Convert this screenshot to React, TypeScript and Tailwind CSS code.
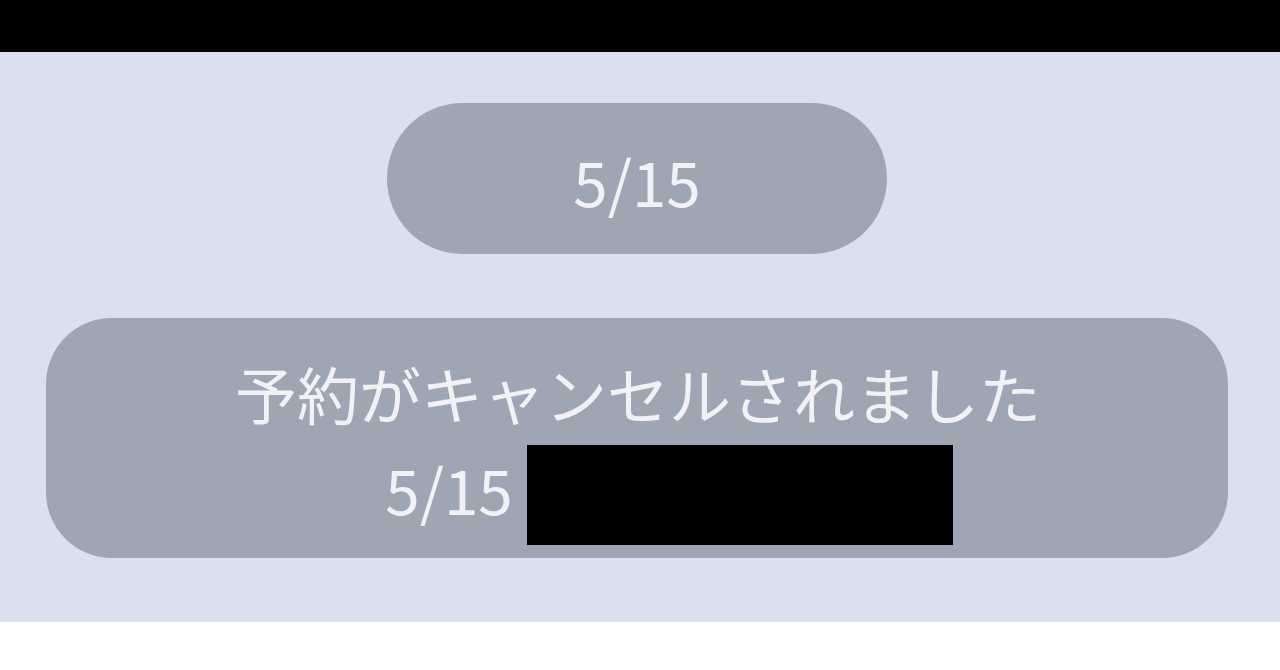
import React from 'react'

const FONT = { fontFamily: '"Noto Sans CJK JP", "Noto Sans", sans-serif' }

function DatePill({ label }: { label: string }) {
  return (
    <div className="ml-[387px] w-[500px] h-[151px] rounded-full bg-[#9ea5b3] flex items-center justify-center">
      <span className="text-[62px] leading-none text-[#f1f2f5] pt-[3px]">{label}</span>
    </div>
  )
}

function NoticeBubble() {
  return (
    <div className="ml-[46px] mt-[64px] w-[1182px] h-[240px] rounded-[66px] bg-[#9ea5b3] flex flex-col items-center pt-[30px] text-[#f1f2f5]">
      <div className="h-[90px] flex items-center text-[62px] leading-none pl-[2px]">
        予約がキャンセルされました
      </div>
      {/* date + redacted detail */}
      <div className="pl-[64px] flex items-start mt-[7px]">
        <span className="text-[62px] leading-none pt-[12px]">5/15</span>
        <div className="ml-[14px] w-[426px] h-[100px] bg-black" />
      </div>
    </div>
  )
}

export default function App() {
  return (
    <div className="w-[1280px] h-[670px] bg-white flex flex-col" style={FONT}>
      <div className="h-[52px] bg-black" />
      <div className="h-[570px] bg-[#dbe0ef] flex flex-col items-start pt-[51px]">
        <DatePill label="5/15" />
        <NoticeBubble />
      </div>
    </div>
  )
}
